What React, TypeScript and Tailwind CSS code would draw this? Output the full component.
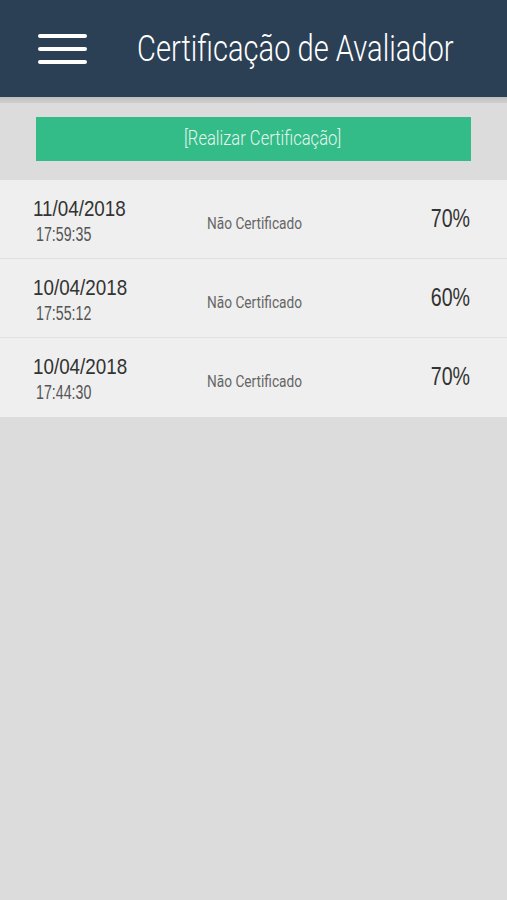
import React from "react";

const rows = [
  { date: "11/04/2018", time: "17:59:35", pct: "70%" },
  { date: "10/04/2018", time: "17:55:12", pct: "60%" },
  { date: "10/04/2018", time: "17:44:30", pct: "70%" },
];

const roboto = { fontFamily: 'Roboto, "Liberation Sans", sans-serif' };
const helv = { fontFamily: '"Liberation Sans", Arial, sans-serif' };

export default function App() {
  return (
    <div className="w-[507px] h-[900px] bg-[#dcdcdc] flex flex-col overflow-hidden" style={helv}>
      <header className="h-[97px] bg-[#2b4055] flex items-center shrink-0">
        <div className="ml-[38px] w-[49px] flex flex-col gap-[9px] shrink-0">
          <div className="h-[4px] bg-white rounded-full" />
          <div className="h-[4px] bg-white rounded-full" />
          <div className="h-[4px] bg-white rounded-full" />
        </div>
        <h1
          className="ml-[50px] text-white text-[36px] font-light leading-none whitespace-nowrap origin-left scale-x-[0.808]"
          style={roboto}
        >
          Certificação de Avaliador
        </h1>
      </header>
      <div className="h-[6px] bg-gradient-to-b from-[#bfbfc1] to-[#cfcfd0] shrink-0" />
      <div className="px-[36px] pt-[14px] pb-[19px] shrink-0">
        <div className="h-[44px] bg-[#33bb88] flex items-center justify-center">
          <span className="ml-[18px] text-[#e6f7ef] text-[19.5px] font-light whitespace-nowrap scale-x-[0.85]" style={roboto}>
            [Realizar Certificação]
          </span>
        </div>
      </div>
      <div className="flex flex-col">
        {rows.map((r, i) => (
          <div
            key={i}
            className={`h-[79px] bg-[#efefef] flex items-start ${i < rows.length - 1 ? "border-b border-[#e2e2e2]" : ""}`}
          >
            <div className="ml-[33px] w-[174px] pt-[17px] flex flex-col shrink-0">
              <span className="text-[22px] leading-[24px] text-[#333] whitespace-nowrap origin-left scale-x-[0.855]">
                {r.date}
              </span>
              <span className="mt-[3px] ml-[3px] text-[20px] leading-[20px] text-[#555] whitespace-nowrap origin-left scale-x-[0.71]">
                {r.time}
              </span>
            </div>
            <div
              className="mt-[33px] text-[17px] leading-[20px] text-[#666] whitespace-nowrap origin-left scale-x-[0.805]"
              style={roboto}
            >
              Não Certificado
            </div>
            <div className="ml-auto mr-[37px] mt-[24px] text-[26.5px] leading-[28px] text-[#333] whitespace-nowrap origin-right scale-x-[0.74]">
              {r.pct}
            </div>
          </div>
        ))}
      </div>
    </div>
  );
}
